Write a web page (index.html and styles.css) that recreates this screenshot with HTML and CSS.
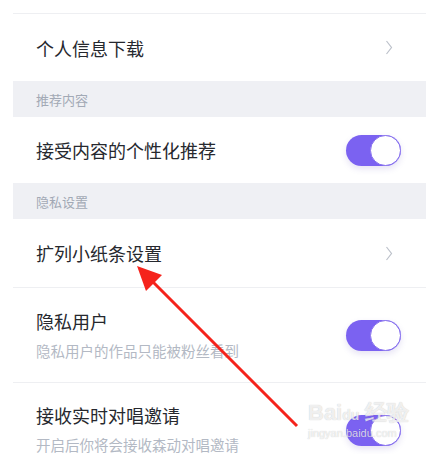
FILE: index.html
```html
<!DOCTYPE html>
<html lang="zh">
<head>
<meta charset="utf-8">
<link rel="stylesheet" href="styles.css">
</head>
<body>
<div class="page">
  <div class="list">
    <div class="top-gap"></div>
    <div class="row row-h67">
      <span class="title">个人信息下载</span>
      <svg class="chev" width="8" height="15" viewBox="0 0 8 15"><path d="M1.5 1 L6.5 7.5 L1.5 14" fill="none" stroke="#bcc1ca" stroke-width="1.2"/></svg>
    </div>
    <div class="section">推荐内容</div>
    <div class="row row-h66">
      <span class="title">接受内容的个性化推荐</span>
      <span class="toggle"><span class="knob"></span></span>
    </div>
    <div class="section">隐私设置</div>
    <div class="row row-h67 bordered">
      <span class="title">扩列小纸条设置</span>
      <svg class="chev" width="8" height="15" viewBox="0 0 8 15"><path d="M1.5 1 L6.5 7.5 L1.5 14" fill="none" stroke="#bcc1ca" stroke-width="1.2"/></svg>
    </div>
    <div class="row row-tall bordered">
      <div class="texts">
        <span class="title">隐私用户</span>
        <span class="sub">隐私用户的作品只能被粉丝看到</span>
      </div>
      <span class="toggle"><span class="knob"></span></span>
    </div>
    <div class="row row-tall last">
      <div class="texts">
        <span class="title">接收实时对唱邀请</span>
        <span class="sub">开启后你将会接收森动对唱邀请</span>
      </div>
      <span class="toggle"><span class="knob"></span></span>
    </div>
  </div>
  <svg class="arrow" width="426" height="454" viewBox="0 0 426 454">
    <line x1="297" y1="426" x2="150" y2="279" stroke="#f5231c" stroke-width="3"/>
    <polygon points="137,266 162,275 146,291" fill="#f5231c"/>
  </svg>
  <div class="wm">
    <span class="wm1">Bai<b>du</b> 经验</span>
    <span class="wm2">jingyan.baidu.com</span>
  </div>
</div>
</body>
</html>
```

FILE: styles.css
```css
* { box-sizing: border-box; }
html, body { margin: 0; padding: 0; background: #fff; }
body {
  font-family: "Noto Sans CJK SC", "Noto Sans", sans-serif;
  width: 426px;
  height: 454px;
  overflow: hidden;
}
.page { position: relative; width: 426px; height: 454px; }
.list { margin-left: 13px; }
.top-gap { height: 14px; border-bottom: 1px solid #eeeff2; }
.row {
  display: flex;
  align-items: center;
  justify-content: space-between;
  padding: 0 25px 0 23px;
}
.row-h67 { height: 67px; }
.row-h66 { height: 66px; }
.row.bordered { border-bottom: 1px solid #eeeff2; }
.row-h67.bordered { height: 69px; }
.row-tall { height: 95px; }
.row-tall.last { height: 80px; align-items: flex-start; padding-top: 20px; }
.title { font-size: 18px; color: #26282e; line-height: 24px; }
.texts { display: flex; flex-direction: column; gap: 7px; }
.sub { font-size: 14.5px; color: #b3b9c4; line-height: 22px; }
.chev { margin-right: 8px; }
.section {
  height: 36px;
  background: #eff0f4;
  padding-left: 23px;
  font-size: 13px;
  color: #a2a9b5;
  display: flex;
  align-items: center;
}
.toggle {
  position: relative;
  width: 55px;
  height: 31px;
  border-radius: 16px;
  background: #7b62f1;
  flex-shrink: 0;
  box-shadow: 0 3px 6px rgba(90, 70, 180, 0.15);
}
.row-tall.last .toggle { margin-top: 12px; }
.knob {
  position: absolute;
  right: 0;
  top: 0;
  width: 31px;
  height: 31px;
  border-radius: 50%;
  background: #fff;
  border: 1px solid #8a74ee;
}
.arrow { position: absolute; left: 0; top: 0; pointer-events: none; }
.wm {
  position: absolute;
  left: 308px;
  top: 402px;
  display: flex;
  flex-direction: column;
  color: rgba(255,255,255,0.75);
  font-family: "Liberation Sans", sans-serif;
  text-shadow: 0 0 1px rgba(0,0,0,0.25);
}
.wm1 { font-size: 22px; line-height: 22px; font-weight: bold; }
.wm1 b { font-size: 14px; }
.wm2 { font-size: 11px; line-height: 14px; }
```
